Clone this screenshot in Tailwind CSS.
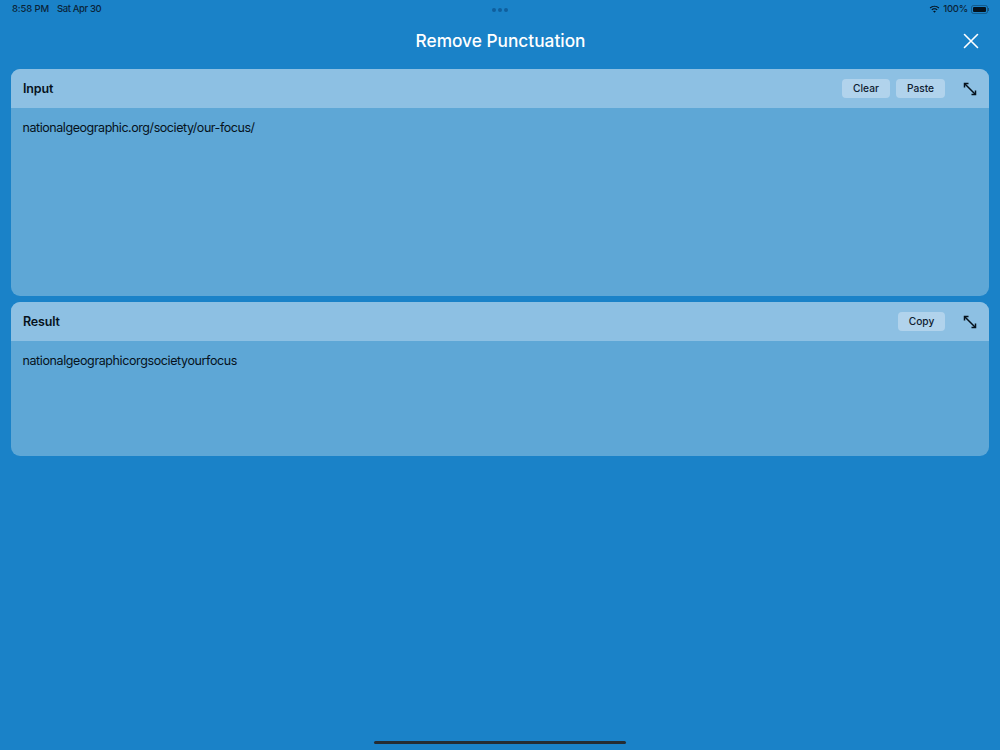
<!DOCTYPE html>
<html lang="en">
<head>
  <meta charset="UTF-8" />
  <title>Remove Punctuation</title>
  <script src="https://cdn.jsdelivr.net/npm/@tailwindcss/browser@4"></script>
</head>
<body class="w-[1000px] h-[750px] overflow-hidden bg-[#1a82c8] font-['Inter','Liberation_Sans',sans-serif] relative">
  <!-- Status bar -->
  <div class="h-[18px] pl-3 pr-[11px] flex items-center justify-between text-[9.5px] font-medium text-[#0a2438]">
    <div class="flex gap-2">
      <span class="tracking-[-0.15px]">8:58 PM</span>
      <span class="tracking-[-0.4px]">Sat Apr 30</span>
    </div>
    <div class="flex items-center">
      <svg class="w-[11px] h-[9px] mr-[3px]" viewBox="0 0 22 17" fill="#04121d"><path d="M11 3.200c3.100 0 5.900 1.200 8 3.200l1.600-1.700C18.100 2.300 14.700.8 11 .8S3.900 2.300 1.400 4.700L3 6.400c2.100-2 4.900-3.200 8-3.200z"/><path d="M11 8.200c1.700 0 3.300.7 4.500 1.800l1.700-1.700C15.600 6.800 13.400 5.800 11 5.800s-4.600 1-6.200 2.500L6.500 10c1.200-1.100 2.800-1.800 4.500-1.800z"/><path d="M11 10.800c-1.100 0-2.100.4-2.800 1.100L11 15l2.800-3.100c-.7-.7-1.700-1.100-2.800-1.100z"/></svg>
      <span class="tracking-[-0.2px]">100%</span>
      <div class="flex items-center ml-[3px]">
        <div class="w-[17px] h-[9px] rounded-[2.500px] border border-[#0a2438]/40 p-px"><div class="w-full h-full rounded-[1px] bg-[#04121d]"></div></div>
        <div class="w-px h-[3px] bg-[#0a2438]/50"></div>
      </div>
    </div>
  </div>
  <!-- Multitasking dots -->
  <div class="absolute top-[8px] left-[492px] flex gap-[2px]">
    <div class="w-[4px] h-[4px] rounded-full bg-[#0f5f9e]"></div>
    <div class="w-[4px] h-[4px] rounded-full bg-[#0f5f9e]"></div>
    <div class="w-[4px] h-[4px] rounded-full bg-[#0f5f9e]"></div>
  </div>

  <!-- Title bar -->
  <div class="h-[51px] pb-[5px] px-[20px] flex items-center justify-between relative">
    <div class="w-[20px]"></div>
    <h1 class="text-[17.300px] font-medium text-white leading-none">Remove Punctuation</h1>
    <svg class="w-[20px] h-[20px] -mr-px" viewBox="0 0 20 20" fill="none" stroke="white" stroke-width="1.600" stroke-linecap="round"><path d="M3.500 3.500l13 13M16.500 3.500l-13 13"/></svg>
  </div>

  <main class="px-[11px] flex flex-col gap-[6px]">
    <!-- Input card -->
    <section class="h-[227px] rounded-[9px] overflow-hidden bg-[#5ea7d6] flex flex-col">
      <div class="h-[39px] shrink-0 bg-[#8dc0e3] pl-[12px] pr-[12px] flex items-center justify-between">
        <h2 class="text-[12.500px] font-semibold tracking-[-0.15px] text-[#06121c] translate-y-px">Input</h2>
        <div class="flex items-center">
          <button class="w-[48px] h-[19px] rounded-[4px] bg-[#b1d3ec] text-[10.200px] font-medium text-[#0e2030]">Clear</button>
          <button class="w-[49px] h-[19px] ml-[6px] rounded-[4px] bg-[#b1d3ec] text-[10.200px] font-medium text-[#0e2030]">Paste</button>
          <svg class="w-[14px] h-[14px] ml-[18px]" viewBox="0 0 14 14" fill="none" stroke="#06121c" stroke-width="1.500"><path d="M2 2l10 10"/><path d="M1.500 5.500v-4h4M12.500 8.500v4h-4"/></svg>
        </div>
      </div>
      <p class="pl-[11.500px] pt-[12px] text-[12.500px] tracking-[-0.44px] leading-[15px] text-[#06121c]">nationalgeographic.org/society/our-focus/</p>
    </section>

    <!-- Result card -->
    <section class="h-[154px] rounded-[9px] overflow-hidden bg-[#5ea7d6] flex flex-col">
      <div class="h-[39px] shrink-0 bg-[#8dc0e3] pl-[12px] pr-[12px] flex items-center justify-between">
        <h2 class="text-[12.500px] font-semibold tracking-[-0.15px] text-[#06121c] translate-y-px">Result</h2>
        <div class="flex items-center">
          <button class="w-[47px] h-[19px] rounded-[4px] bg-[#b1d3ec] text-[10.200px] font-medium text-[#0e2030]">Copy</button>
          <svg class="w-[14px] h-[14px] ml-[18px]" viewBox="0 0 14 14" fill="none" stroke="#06121c" stroke-width="1.500"><path d="M2 2l10 10"/><path d="M1.500 5.500v-4h4M12.500 8.500v4h-4"/></svg>
        </div>
      </div>
      <p class="pl-[11.500px] pt-[12px] text-[12.500px] tracking-[-0.39px] leading-[15px] text-[#06121c]">nationalgeographicorgsocietyourfocus</p>
    </section>
  </main>

  <!-- Home indicator -->
  <div class="absolute left-[374px] bottom-[6px] w-[252px] h-[3px] rounded-full bg-[#252c32]"></div>
</body>
</html>
